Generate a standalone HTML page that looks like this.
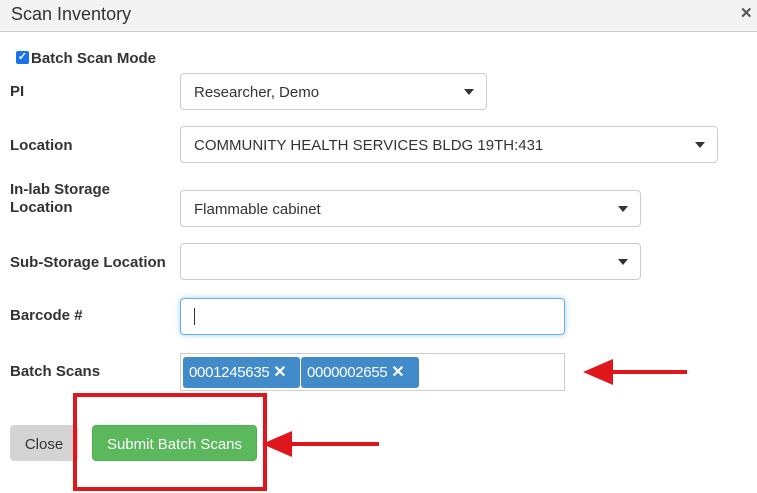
<!DOCTYPE html>
<html><head><style>
*{box-sizing:border-box;margin:0;padding:0}
body{width:757px;height:493px;overflow:hidden;background:#fff;font-family:"Liberation Sans",Arial,sans-serif;color:#333;position:relative}
.hdr{position:absolute;left:0;top:0;width:757px;height:32px;background:#f3f3f3;border-bottom:1px solid #ccc}
.hdr .t{position:absolute;left:11px;top:4px;font-size:18px;color:#333}
.hdr .x{position:absolute;left:740px;top:4px;font-size:15px;font-weight:bold;color:#555}
.a{position:absolute}
.lbl{position:absolute;left:10px;font-size:15px;font-weight:bold;color:#333;line-height:18px}
.sel{position:absolute;left:180px;height:37px;border:1px solid #ccc;border-radius:4px;font-size:15px;padding:10px 0 0 13px;line-height:18px;color:#333}
.sel .c{position:absolute;right:12px;top:15px;width:0;height:0;border-left:5px solid transparent;border-right:5px solid transparent;border-top:6px solid #333}
.tag{position:absolute;top:3px;height:31px;background:#428bca;color:#fff;font-size:15px;line-height:32px;padding-left:6px;border-radius:3px;letter-spacing:-0.3px}
.btn{position:absolute;top:425px;height:36px;border-radius:4px;font-size:15px;display:flex;align-items:center;justify-content:center;padding-top:2px}
</style></head><body>
<div class="hdr"><div class="t">Scan Inventory</div><div class="x">✕</div></div>
<div class="a" style="left:16px;top:51px;width:13px;height:13px;background:#1a73e8;border-radius:2px;color:#fff;font-size:11px;line-height:13px;text-align:center;font-weight:bold">✓</div>
<div class="a" style="left:31px;top:50px;font-size:15px;font-weight:bold;line-height:18px">Batch Scan Mode</div>
<div class="lbl" style="top:83px">PI</div>
<div class="sel" style="top:73px;width:307px">Researcher, Demo<div class="c"></div></div>
<div class="lbl" style="top:137px">Location</div>
<div class="sel" style="top:126px;width:538px">COMMUNITY HEALTH SERVICES BLDG 19TH:431<div class="c"></div></div>
<div class="lbl" style="top:181px">In-lab Storage<br>Location</div>
<div class="sel" style="top:190px;width:461px">Flammable cabinet<div class="c"></div></div>
<div class="lbl" style="top:254px">Sub-Storage Location</div>
<div class="sel" style="top:243px;width:461px"><div class="c"></div></div>
<div class="lbl" style="top:307px">Barcode #</div>
<div class="a" style="left:180px;top:298px;width:385px;height:37px;border:1px solid #66afe9;border-radius:4px;box-shadow:0 0 6px rgba(102,175,233,.6)"><div class="a" style="left:13px;top:9px;width:1px;height:17px;background:#333"></div></div>
<div class="lbl" style="top:363px">Batch Scans</div>
<div class="a" style="left:180px;top:353px;width:385px;height:38px;border:1px solid #ccc">
<div class="tag" style="left:2px;width:117px">0001245635 <b style="font-size:16px">✕</b></div>
<div class="tag" style="left:120px;width:118px">0000002655 <b style="font-size:16px">✕</b></div>
</div>
<div class="btn" style="left:10px;width:68px;background:#d4d4d4;color:#333">Close</div>
<div class="btn" style="left:92px;width:165px;background:#5cb85c;border:1px solid #4cae4c;color:#fff">Submit Batch Scans</div>
<div class="a" style="left:73px;top:393px;width:194px;height:98px;border:4px solid #e0161d"></div>
<svg class="a" style="left:0;top:0" width="757" height="493">
<rect x="605" y="370" width="82" height="4" fill="#e0161d"/><polygon points="583,372 613,359 613,385" fill="#e0161d"/>
<rect x="285" y="442" width="94" height="4" fill="#e0161d"/><polygon points="262,444 292,431 292,457" fill="#e0161d"/>
</svg>
</body></html>
